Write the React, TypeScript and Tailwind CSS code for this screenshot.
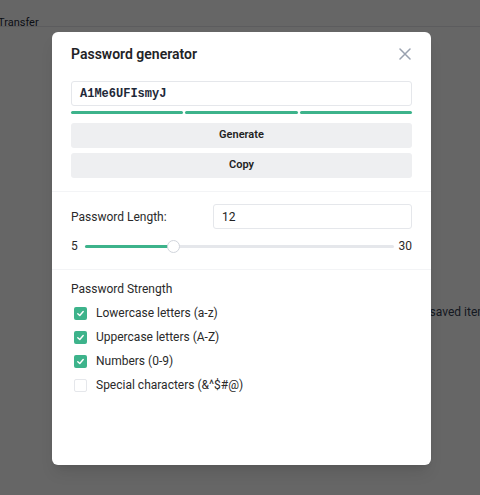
import React from "react";

export default function App() {
  const opts = [
    { label: "Lowercase letters (a-z)", on: true },
    { label: "Uppercase letters (A-Z)", on: true },
    { label: "Numbers (0-9)", on: true },
    { label: "Special characters (&^$#@)", on: false },
  ];
  return (
    <div className="relative w-[480px] h-[495px] overflow-hidden bg-white font-['Roboto',sans-serif]">
      {/* underlying page */}
      <div className="flex flex-col h-full">
        <div className="h-[27px] border-b border-gray-200 flex items-end pb-[1px]">
          <span className="text-[11px] text-gray-800 -ml-[2px] leading-[12px] mb-[-4px]">Transfer</span>
        </div>
        <div className="flex-1 flex justify-end pt-[276px]">
          <span className="text-[12px] text-gray-700 mr-[-14px]">saved items</span>
        </div>
      </div>
      {/* overlay */}
      <div className="absolute inset-0 bg-black/60" />
      {/* modal */}
      <div className="absolute left-[52px] top-[32px] w-[379px] h-[433px] bg-white rounded-[6px] shadow-lg flex flex-col">
        <div className="flex items-center justify-between pl-[19px] pr-[20px] h-[44px]">
          <span className="text-[14px] font-semibold text-[#1f2326]">Password generator</span>
          <svg width="12" height="12" viewBox="0 0 12 12" className="text-gray-400">
            <path d="M1 1 L11 11 M11 1 L1 11" stroke="currentColor" strokeWidth="1.5" strokeLinecap="round" />
          </svg>
        </div>
        <div className="px-[19px] pt-[5px] flex flex-col">
          <div className="h-[25px] border border-gray-200 rounded-[3px] flex items-center pl-[8px] font-['Liberation_Mono','Courier_New',monospace] text-[12px] font-semibold text-gray-800">
            A1Me6UFIsmyJ
          </div>
          <div className="grid grid-cols-3 gap-[2px] mt-[5px]">
            <div className="h-[3px] bg-[#3db38b] rounded-full" />
            <div className="h-[3px] bg-[#3db38b] rounded-full" />
            <div className="h-[3px] bg-[#3db38b] rounded-full" />
          </div>
          <button className="mt-[9px] h-[25px] bg-[#eeeff1] rounded-[3px] text-[11px] font-semibold text-[#222]">Generate</button>
          <button className="mt-[5px] h-[25px] bg-[#eeeff1] rounded-[3px] text-[11px] font-semibold text-[#222]">Copy</button>
        </div>
        <div className="mt-[13px] border-t border-gray-100" />
        <div className="px-[19px] pt-[12px] flex flex-col">
          <div className="flex items-center">
            <span className="w-[142px] text-[12px] text-[#2a2a2a]">Password Length:</span>
            <div className="flex-1 h-[25px] border border-gray-200 rounded-[3px] flex items-center pl-[8px] text-[12px] text-[#222]">12</div>
          </div>
          <div className="flex items-center mt-[5px] h-[24px] text-[12px] text-[#2a2a2a]">
            <span className="w-[14px]">5</span>
            <div className="relative flex-1 h-[3px] bg-gray-200 rounded-full">
              <div className="absolute left-0 top-0 h-[3px] w-[88px] bg-[#3db38b] rounded-full" />
              <div className="absolute left-[82px] top-[-5px] w-[13px] h-[13px] rounded-full bg-white border border-gray-300" />
            </div>
            <span className="ml-[5px]">30</span>
          </div>
        </div>
        <div className="mt-[11px] border-t border-gray-100" />
        <div className="px-[19px] pt-[12px] flex flex-col">
          <span className="text-[12px] text-[#2a2a2a] leading-[14px]">Password Strength</span>
          <div className="flex flex-col mt-[5px]">
            {opts.map((o) => (
              <div key={o.label} className="flex items-center h-[24px]">
                <div className="w-[13px] h-[13px] ml-[3px] mr-[9px] flex items-center justify-center">
                  {o.on ? (
                    <div className="w-[13px] h-[13px] rounded-[2px] bg-[#3db38b] flex items-center justify-center">
                      <svg width="9" height="9" viewBox="0 0 10 10">
                        <path d="M2 5.2 L4.2 7.2 L8 2.8" stroke="white" strokeWidth="1.6" fill="none" strokeLinecap="round" strokeLinejoin="round" />
                      </svg>
                    </div>
                  ) : (
                    <div className="w-[13px] h-[13px] rounded-[2px] border border-gray-200 bg-white" />
                  )}
                </div>
                <span className="text-[12px] text-[#2a2a2a]">{o.label}</span>
              </div>
            ))}
          </div>
        </div>
      </div>
    </div>
  );
}
